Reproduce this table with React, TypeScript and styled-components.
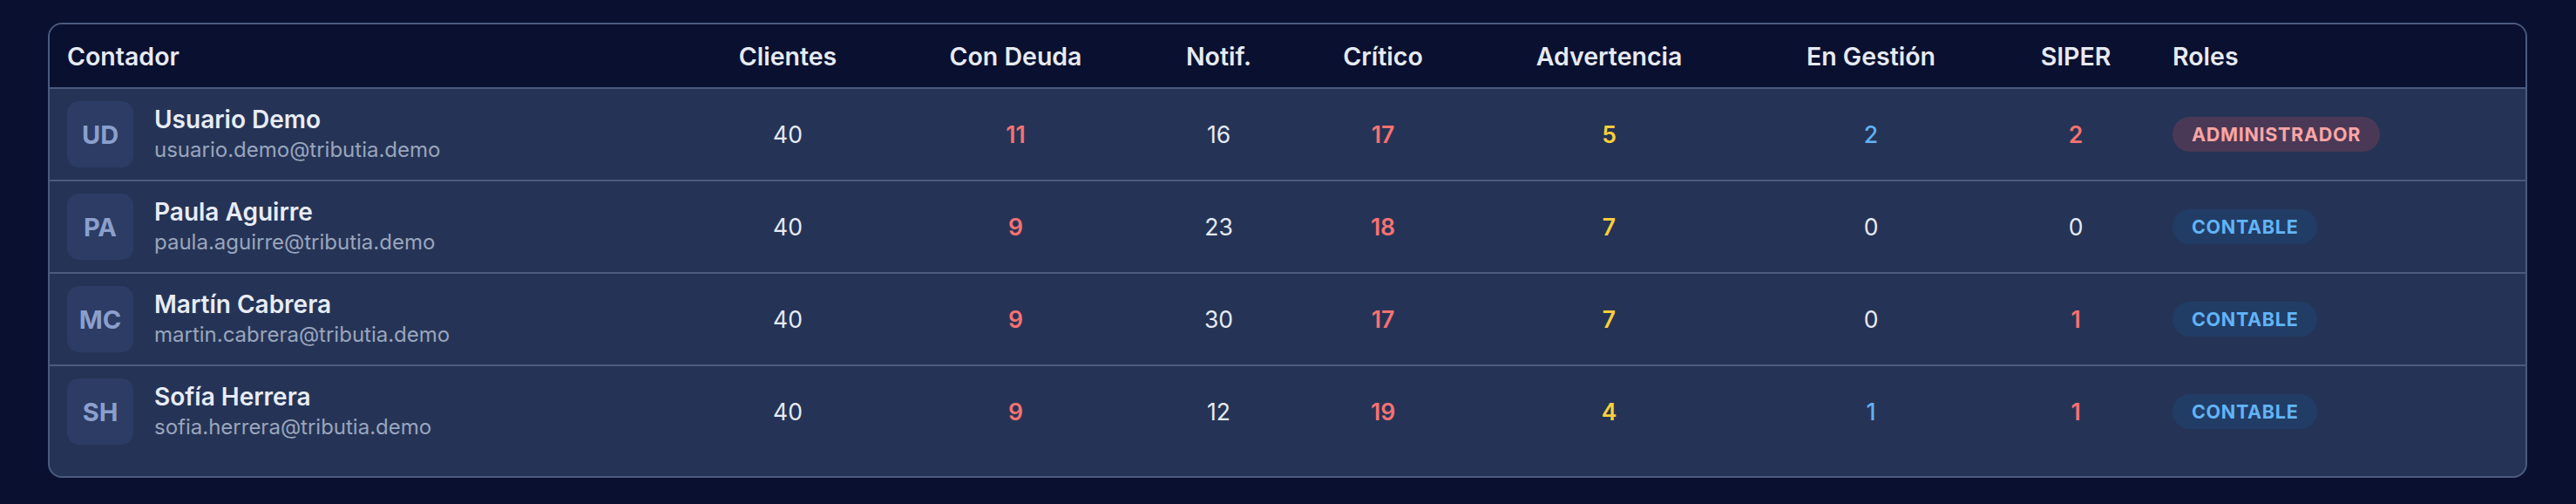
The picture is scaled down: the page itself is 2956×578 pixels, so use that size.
import React from "react";
import styled, { createGlobalStyle } from "styled-components";

const GlobalStyle = createGlobalStyle`
  html, body {
    margin: 0;
    padding: 0;
    background: #0a1030;
  }
  body {
    font-family: Inter, "Noto Sans", "Liberation Sans", sans-serif;
    -webkit-font-smoothing: antialiased;
  }
`;

const Page = styled.div`
  width: 2956px;
  height: 578px;
  box-sizing: border-box;
  padding: 26px 56px 0 55px;
  background: #0a1030;
`;

const Card = styled.div`
  border: 2px solid #4b5b80;
  border-radius: 16px;
  overflow: hidden;
  background: #253456;
  padding-bottom: 22px;
`;

const COLS = "733px 228px 295px 171px 206px 313px 288px 182px 1fr";

const HeaderRow = styled.div`
  display: grid;
  grid-template-columns: ${COLS};
  height: 72px;
  align-items: center;
  background: #0a1030;
  border-bottom: 2px solid #4b5b80;
`;

const HeadCell = styled.div<{ $align?: "left" | "center" }>`
  padding: 0 20px;
  text-align: ${(p) => p.$align ?? "center"};
  color: #e6eaf3;
  font-size: 28.5px;
  font-weight: 600;
  white-space: nowrap;
`;

const Row = styled.div<{ $last?: boolean }>`
  display: grid;
  grid-template-columns: ${COLS};
  height: 104px;
  align-items: center;
  border-bottom: ${(p) => (p.$last ? "none" : "2px solid #4b5b80")};
`;

const UserCell = styled.div`
  display: flex;
  align-items: center;
  gap: 24px;
  padding: 0 20px;
`;

const Avatar = styled.div`
  width: 76px;
  height: 76px;
  border-radius: 14px;
  background: #2c3c64;
  color: #8b9fcc;
  font-size: 29px;
  font-weight: 700;
  display: flex;
  align-items: center;
  justify-content: center;
  flex-shrink: 0;
`;

const UserText = styled.div`
  display: flex;
  flex-direction: column;
  gap: 3px;
`;

const Name = styled.div`
  color: #e8ecf5;
  font-size: 28px;
  font-weight: 600;
  line-height: 33px;
`;

const Email = styled.div`
  color: #9aa5bd;
  font-size: 24px;
  line-height: 30px;
`;

type Tone = "plain" | "red" | "yellow" | "blue";

const toneColor: Record<Tone, string> = {
  plain: "#e6eaf3",
  red: "#f87171",
  yellow: "#fbcf3a",
  blue: "#62b1f6",
};

const toneWeight: Record<Tone, number> = {
  plain: 400,
  red: 600,
  yellow: 600,
  blue: 500,
};

const NumCell = styled.div<{ $tone: Tone }>`
  padding: 0 20px;
  text-align: center;
  font-size: 26.5px;
  color: ${(p) => toneColor[p.$tone]};
  font-weight: ${(p) => toneWeight[p.$tone]};
`;

const RoleCell = styled.div`
  padding: 0 20px;
  display: flex;
  align-items: center;
`;

const Badge = styled.span<{ $kind: "admin" | "contable" }>`
  display: inline-flex;
  align-items: center;
  height: 40px;
  padding: 0 22px;
  border-radius: 20px;
  font-size: 21.5px;
  font-weight: 700;
  letter-spacing: 0.7px;
  background: ${(p) => (p.$kind === "admin" ? "#4a3956" : "#213d66")};
  color: ${(p) => (p.$kind === "admin" ? "#fca5a5" : "#62b4f6")};
`;

type User = {
  initials: string;
  name: string;
  email: string;
  clientes: number;
  deuda: number;
  notif: number;
  critico: number;
  advertencia: number;
  gestion: number;
  siper: number;
  role: "admin" | "contable";
};

const users: User[] = [
  { initials: "UD", name: "Usuario Demo", email: "usuario.demo@tributia.demo", clientes: 40, deuda: 11, notif: 16, critico: 17, advertencia: 5, gestion: 2, siper: 2, role: "admin" },
  { initials: "PA", name: "Paula Aguirre", email: "paula.aguirre@tributia.demo", clientes: 40, deuda: 9, notif: 23, critico: 18, advertencia: 7, gestion: 0, siper: 0, role: "contable" },
  { initials: "MC", name: "Martín Cabrera", email: "martin.cabrera@tributia.demo", clientes: 40, deuda: 9, notif: 30, critico: 17, advertencia: 7, gestion: 0, siper: 1, role: "contable" },
  { initials: "SH", name: "Sofía Herrera", email: "sofia.herrera@tributia.demo", clientes: 40, deuda: 9, notif: 12, critico: 19, advertencia: 4, gestion: 1, siper: 1, role: "contable" },
];

const headers = ["Clientes", "Con Deuda", "Notif.", "Crítico", "Advertencia", "En Gestión", "SIPER"];

export default function App() {
  return (
    <>
      <GlobalStyle />
      <Page>
        <Card>
          <HeaderRow>
            <HeadCell $align="left">Contador</HeadCell>
            {headers.map((h) => (
              <HeadCell key={h}>{h}</HeadCell>
            ))}
            <HeadCell $align="left">Roles</HeadCell>
          </HeaderRow>
          {users.map((u, i) => (
            <Row key={u.email} $last={i === users.length - 1}>
              <UserCell>
                <Avatar>{u.initials}</Avatar>
                <UserText>
                  <Name>{u.name}</Name>
                  <Email>{u.email}</Email>
                </UserText>
              </UserCell>
              <NumCell $tone="plain">{u.clientes}</NumCell>
              <NumCell $tone={u.deuda > 0 ? "red" : "plain"}>{u.deuda}</NumCell>
              <NumCell $tone="plain">{u.notif}</NumCell>
              <NumCell $tone={u.critico > 0 ? "red" : "plain"}>{u.critico}</NumCell>
              <NumCell $tone={u.advertencia > 0 ? "yellow" : "plain"}>{u.advertencia}</NumCell>
              <NumCell $tone={u.gestion > 0 ? "blue" : "plain"}>{u.gestion}</NumCell>
              <NumCell $tone={u.siper > 0 ? "red" : "plain"}>{u.siper}</NumCell>
              <RoleCell>
                <Badge $kind={u.role}>{u.role === "admin" ? "ADMINISTRADOR" : "CONTABLE"}</Badge>
              </RoleCell>
            </Row>
          ))}
        </Card>
      </Page>
    </>
  );
}
